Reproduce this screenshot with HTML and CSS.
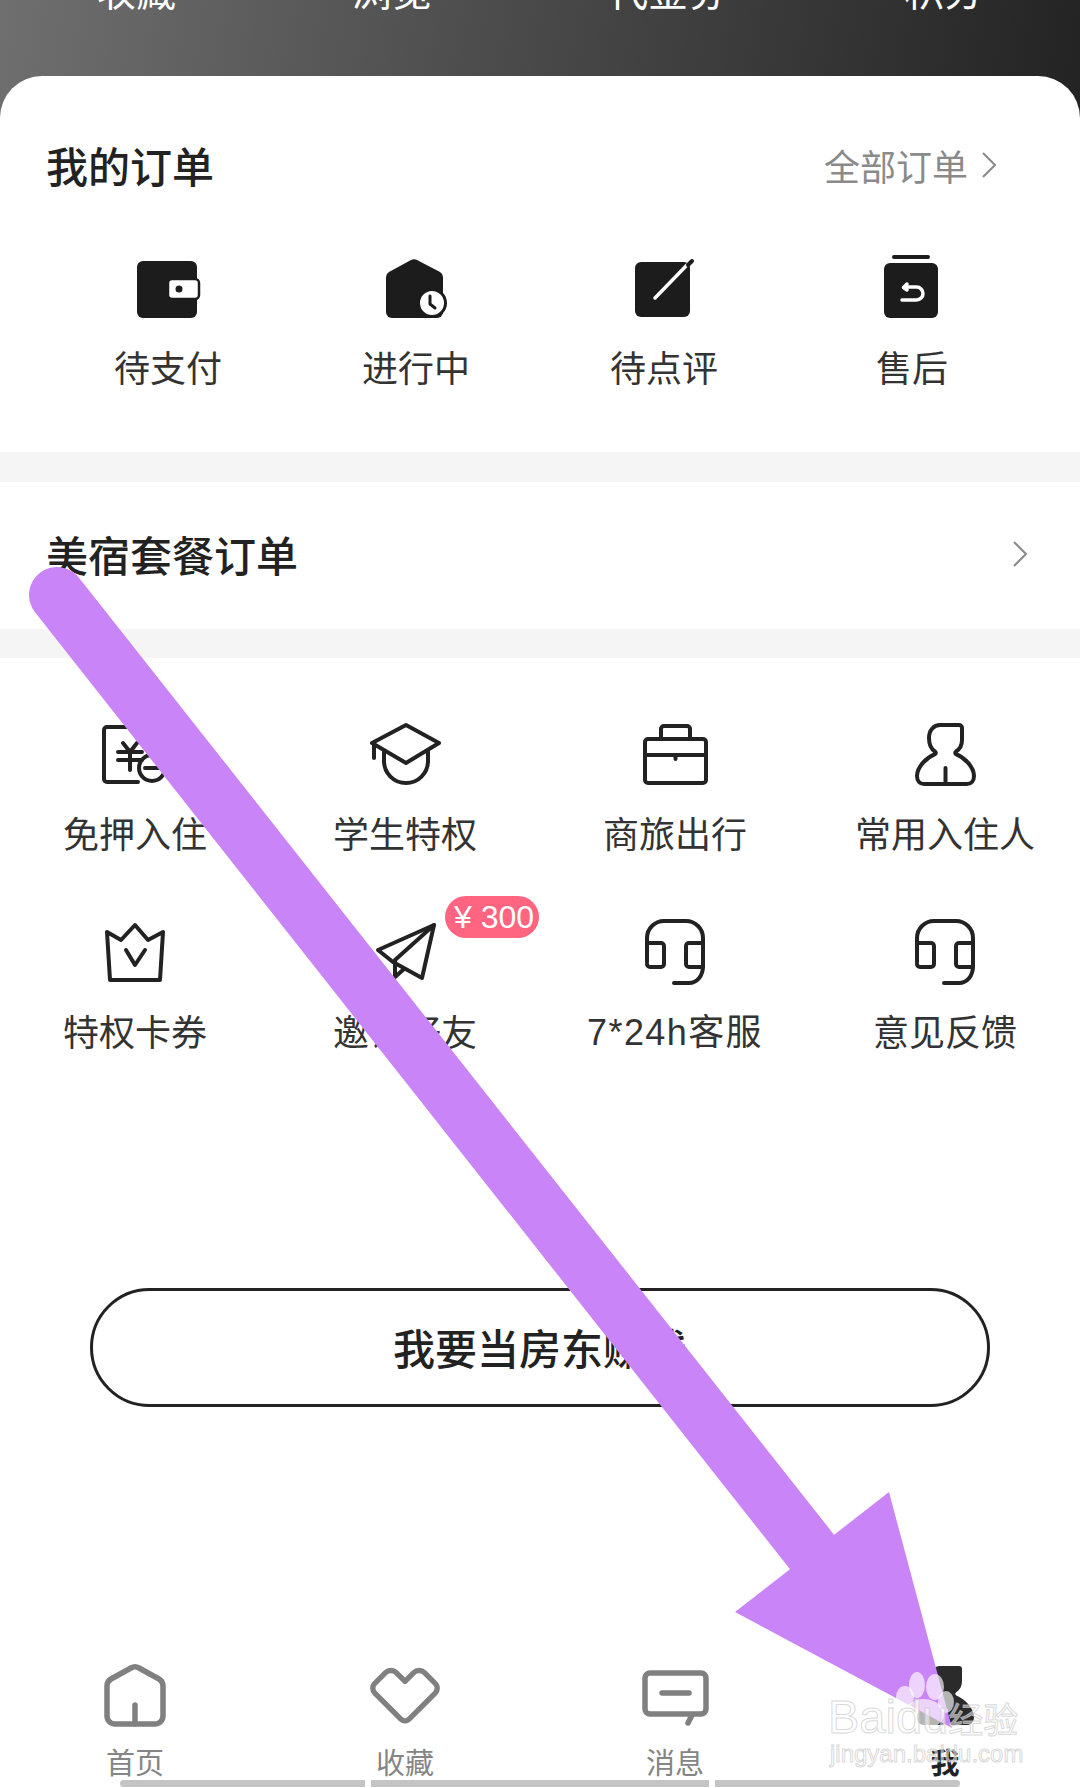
FILE: index.html
```html
<!DOCTYPE html>
<html lang="zh-CN">
<head>
  <meta charset="UTF-8">
  <meta name="viewport" content="width=device-width, initial-scale=1.0">
  <title>我的</title>
  <link rel="stylesheet" href="styles.css">
</head>
<body>

  <svg class="defs" width="0" height="0">
    <symbol id="headset" viewBox="0 0 72 72">
      <path d="M8 46V22A17 17 0 0 1 25 5H47A17 17 0 0 1 64 22V50C64 60 58 67 50 67H35"/>
      <path d="M8 27H22A3 3 0 0 1 25 30V48A3 3 0 0 1 22 51H11A3 3 0 0 1 8 48"/>
      <path d="M64 27H50A3 3 0 0 0 47 30V48A3 3 0 0 0 50 51H64"/>
    </symbol>
  </svg>

  <div class="page">
    <div class="top">
      <span>收藏</span>
      <span>浏览</span>
      <span>代金券</span>
      <span>积分</span>
    </div>

    <div class="card">
      <div class="orders">
        <div class="section-head">
          <h2>我的订单</h2>
          <a class="more">全部订单
            <svg class="chevron" viewBox="0 0 16 26"><path d="M2 1L14 13L2 25"/></svg>
          </a>
        </div>
        <div class="order-grid">
          <div class="item">
            <svg class="icon" viewBox="0 0 72 72">
              <rect x="6" y="7" width="60" height="57" rx="6" fill="#1c1c1c"/>
              <rect x="37" y="25" width="31" height="20" rx="4" fill="#fff" stroke="#1c1c1c" stroke-width="2.5"/>
              <circle cx="48" cy="35" r="3.5" fill="#1c1c1c"/>
            </svg>
            <span>待支付</span>
          </div>
          <div class="item">
            <svg class="icon" viewBox="0 0 72 72">
              <path d="M32 6a7 7 0 0 1 6 0L61 18a6 6 0 0 1 3 5V58a6 6 0 0 1-6 6H13a6 6 0 0 1-6-6V23a6 6 0 0 1 3-5Z" fill="#1c1c1c"/>
              <circle cx="53" cy="49" r="13.5" fill="#fff" stroke="#1c1c1c" stroke-width="3"/>
              <path d="M51 42V50L56 54" fill="none" stroke="#1c1c1c" stroke-width="3" stroke-linecap="round" stroke-linejoin="round"/>
            </svg>
            <span>进行中</span>
          </div>
          <div class="item">
            <svg class="icon" viewBox="0 0 72 72">
              <rect x="8" y="8" width="55" height="55" rx="6" fill="#1c1c1c"/>
              <path d="M28 44L60 11" stroke="#fff" stroke-width="3.5" stroke-linecap="round"/>
              <path d="M61 11L65 7" stroke="#1c1c1c" stroke-width="4" stroke-linecap="round"/>
            </svg>
            <span>待点评</span>
          </div>
          <div class="item">
            <svg class="icon" viewBox="0 0 72 72">
              <path d="M19 3H53" stroke="#1c1c1c" stroke-width="4" stroke-linecap="round"/>
              <rect x="9" y="9" width="54" height="55" rx="6" fill="#1c1c1c"/>
              <path d="M27 46H41.500A6.500 6.500 0 0 0 41.500 33H29M32 30L28.500 33.500L32 36" fill="none" stroke="#fff" stroke-width="3.500" stroke-linecap="round" stroke-linejoin="round"/>
            </svg>
            <span>售后</span>
          </div>
        </div>
      </div>

      <div class="band"></div>

      <div class="package">
        <h2>美宿套餐订单</h2>
        <svg class="chevron" viewBox="0 0 16 26"><path d="M2 1L14 13L2 25"/></svg>
      </div>

      <div class="band"></div>

      <div class="service-grid">
        <div class="item">
          <svg class="icon line" viewBox="0 0 72 72">
            <path d="M62 9H8A3 3 0 0 0 5 12V61A3 3 0 0 0 8 64H39"/>
            <path d="M24 25L31 34L38 25M19 34H43M19 42H43M31 34V52"/>
            <circle cx="53" cy="50" r="13"/>
            <path d="M46 50H60"/>
          </svg>
          <span>免押入住</span>
        </div>
        <div class="item">
          <svg class="icon line" viewBox="0 0 72 72">
            <path d="M37 7L70 25L37 45L3 25Z"/>
            <path d="M5 25V40"/>
            <path d="M15 34V43A22 22 0 0 0 59 43V34"/>
          </svg>
          <span>学生特权</span>
        </div>
        <div class="item">
          <svg class="icon line" viewBox="0 0 72 72">
            <rect x="6" y="21" width="61" height="44" rx="3"/>
            <path d="M22 21V11A3 3 0 0 1 25 8H48A3 3 0 0 1 51 11V21"/>
            <path d="M6 37H67M36.500 37V41"/>
          </svg>
          <span>商旅出行</span>
        </div>
        <div class="item">
          <svg class="icon line" viewBox="0 0 72 72">
            <path d="M31 7H50A3 3 0 0 1 53 10V22C53 27 51 31 47 33.500C46 34.300 46 35.500 47 36.200C56 40 65 49 65 58C65 63 62 66 58 66H15C11 66 8 63 8 58C8 49 17 40 26 36.200C27 35.500 27 34.300 26 33.500C22 31 20 26 20 20C20 12 25 7 31 7Z"/>
            <path d="M36.500 66V50"/>
          </svg>
          <span>常用入住人</span>
        </div>
        <div class="item">
          <svg class="icon line" viewBox="0 0 72 72">
            <path d="M8 16L22 24L36 9L49 24L64 16L61 64H11Z"/>
            <path d="M27 34L36 49L46 34"/>
          </svg>
          <span>特权卡券</span>
        </div>
        <div class="item">
          <svg class="icon line" viewBox="0 0 72 72">
            <path d="M65 9L9 34L24 46L53 62Z"/>
            <path d="M65 9L26 44V61L35 53"/>
          </svg>
          <span>邀请好友</span>
          <em class="badge">¥ 300</em>
        </div>
        <div class="item">
          <svg class="icon line"><use href="#headset"/></svg>
          <span class="latin">7*24h客服</span>
        </div>
        <div class="item">
          <svg class="icon line"><use href="#headset"/></svg>
          <span>意见反馈</span>
        </div>
      </div>

      <button class="host-button">我要当房东赚钱</button>

      <div class="tabbar">
        <div class="tab">
          <svg class="icon tab-line" viewBox="0 0 72 72">
            <path d="M32 9A8 8 0 0 1 40 9L60 20A8 8 0 0 1 64 27V57A8 8 0 0 1 56 65H16A8 8 0 0 1 8 57V27A8 8 0 0 1 12 20Z"/>
            <path d="M36 65V46"/>
          </svg>
          <span>首页</span>
        </div>
        <div class="tab">
          <svg class="icon tab-line" viewBox="0 0 74 74">
            <path d="M37 23L28 14A8 8 0 0 0 17 14L6 25A7 7 0 0 0 6 35L33 62A6 6 0 0 0 41 62L68 35A7 7 0 0 0 68 25L57 14A8 8 0 0 0 46 14Z"/>
          </svg>
          <span>收藏</span>
        </div>
        <div class="tab">
          <svg class="icon tab-line" viewBox="0 0 72 72">
            <rect x="6" y="14" width="61" height="41" rx="5"/>
            <path d="M23 34H50M53 56L49 64"/>
          </svg>
          <span>消息</span>
        </div>
        <div class="tab active">
          <svg class="icon" viewBox="0 0 72 72">
            <path d="M31 7H50A3 3 0 0 1 53 10V22C53 27 51 31 47 33.500C46 34.300 46 35.500 47 36.200C56 40 65 49 65 58C65 63 62 66 58 66H15C11 66 8 63 8 58C8 49 17 40 26 36.200C27 35.500 27 34.300 26 33.500C22 31 20 26 20 20C20 12 25 7 31 7Z" fill="#2b2b2b"/>
            <path d="M36.500 66V50" stroke="#fff" stroke-width="4"/>
          </svg>
          <span>我</span>
        </div>
      </div>

      <div class="gesture">
        <i></i><i></i><i></i>
      </div>
    </div>

    <!-- marker drawn over the screenshot -->
    <svg class="marker" viewBox="0 0 1080 1788">
      <path d="M57 595L812 1552" fill="none" stroke="#c985f8" stroke-width="56" stroke-linecap="round"/>
      <path d="M889 1492L735 1612L952 1728Z" fill="#c985f8"/>
    </svg>

    <div class="watermark">
      <svg class="paw" viewBox="0 0 70 70">
        <ellipse cx="15" cy="27" rx="9" ry="11"/>
        <ellipse cx="27" cy="15" rx="8" ry="13"/>
        <ellipse cx="45" cy="17" rx="9" ry="13"/>
        <ellipse cx="56" cy="32" rx="8" ry="11"/>
        <ellipse cx="34" cy="44" rx="20" ry="15"/>
      </svg>
      <div class="wm-brand">Baidu<b>经验</b></div>
      <div class="wm-url">jingyan.baidu.com</div>
    </div>
  </div>

</body>
</html>
```

FILE: styles.css
```css
* {
  box-sizing: border-box;
}

body {
  margin: 0;
  background-color: #fff;
  font-family: "Noto Sans CJK SC", "Liberation Sans", sans-serif;
  color: #2a2a2a;
}

.defs {
  position: absolute;
}

.page {
  position: relative;
  width: 1080px;
  height: 1788px;
  overflow: hidden;
  background-color: #fff;
}

/* Header strip, cut off by the top of the screen */
.top {
  display: flex;
  justify-content: space-between;
  height: 118px;
  padding: 0 96px;
  background: linear-gradient(100deg, #6f6f6f 0%, #4c4c4c 45%, #232323 100%);
  color: #fff;
  font-size: 40px;
  line-height: 44px;
}

.top span {
  margin-top: -33px;
  height: 44px;
}

.card {
  display: flex;
  flex-direction: column;
  height: 1712px;
  margin-top: -42px;
  background-color: #fff;
  border-radius: 42px 42px 0 0;
}

h2 {
  margin: 0;
  font-size: 42px;
  line-height: 48px;
  font-weight: 500;
  color: #222;
}

.chevron {
  width: 16px;
  height: 26px;
  fill: none;
  stroke: #888;
  stroke-width: 2;
}

.orders {
  height: 376px;
  padding-top: 65px;
}

.section-head {
  display: flex;
  justify-content: space-between;
  align-items: center;
  padding: 0 83px 0 46px;
}

.more {
  display: flex;
  align-items: center;
  gap: 13px;
  font-size: 36px;
  line-height: 48px;
  color: #8a8a8a;
}

.order-grid {
  display: grid;
  grid-template-columns: repeat(4, 248px);
  margin: 65px 0 0 43px;
}

.item {
  position: relative;
  display: flex;
  flex-direction: column;
  align-items: center;
  font-size: 36px;
  line-height: 50px;
  color: #333;
}

.latin {
  margin: 3px 0 -3px;
  font-family: "Liberation Sans", "Noto Sans CJK SC", sans-serif;
  letter-spacing: 1.4px;
}

.icon {
  display: block;
  width: 72px;
  height: 72px;
}

.order-grid .icon {
  margin-bottom: 15px;
}

.order-grid span {
  padding-left: 2px;
}

.band {
  height: 29.500px;
  background-color: #f5f5f5;
}

.package {
  display: flex;
  justify-content: space-between;
  align-items: center;
  height: 147px;
  padding: 0 52px 2px 46px;
}

.service-grid {
  display: grid;
  grid-template-columns: repeat(4, 270px);
  row-gap: 59px;
  padding-top: 60px;
}

.service-grid .icon {
  margin-bottom: 17px;
}

.line {
  fill: none;
  stroke: #222;
  stroke-width: 4;
  stroke-linecap: round;
  stroke-linejoin: round;
}

.badge {
  position: absolute;
  top: -20px;
  left: 175px;
  height: 42px;
  padding: 0 5px 0 9px;
  border-radius: 21px;
  background-color: #ff6480;
  color: #fff;
  font-family: "Liberation Sans", sans-serif;
  font-style: normal;
  font-size: 32px;
  line-height: 42px;
  white-space: nowrap;
}

.host-button {
  align-self: center;
  width: 900px;
  height: 119px;
  margin-top: 233px;
  padding-bottom: 4px;
  border: 3px solid #222;
  border-radius: 60px;
  background-color: #fff;
  font-family: inherit;
  font-size: 42px;
  font-weight: 500;
  color: #222;
}

.tabbar {
  display: grid;
  grid-template-columns: repeat(4, 270px);
  margin-top: auto;
}

.tab {
  display: flex;
  flex-direction: column;
  align-items: center;
  font-size: 29px;
  line-height: 32px;
  color: #858585;
}

.tab .icon {
  margin-bottom: 14px;
}

.tab span {
  padding-bottom: 2px;
}

.tab-line {
  fill: none;
  stroke: #808080;
  stroke-width: 5.500;
  stroke-linecap: round;
  stroke-linejoin: round;
}

.tab.active {
  color: #222;
  font-weight: 700;
}

/* Gesture bar along the bottom edge */
.gesture {
  display: flex;
  gap: 6px;
  height: 7px;
  margin: 1px 0;
  padding-left: 120px;
}

.gesture i {
  width: 245px;
  background-color: #c4c4c4;
}

.gesture i:nth-child(2) {
  width: 338px;
}

.gesture i:first-child {
  border-radius: 4px 0 0 4px;
}

.gesture i:last-child {
  border-radius: 0 4px 4px 0;
}

.marker {
  position: absolute;
  top: 0;
  left: 0;
  width: 1080px;
  height: 1788px;
}

.watermark {
  position: absolute;
  top: 1668px;
  left: 828px;
  width: 200px;
  height: 100px;
}

.paw {
  position: absolute;
  top: 2px;
  left: 62px;
  width: 70px;
  height: 70px;
  fill: rgba(255, 255, 255, 0.65);
}

.wm-brand {
  position: absolute;
  top: 26px;
  left: 0;
  font-family: "Liberation Sans", sans-serif;
  font-size: 47px;
  line-height: 46px;
  white-space: nowrap;
  color: rgba(255, 255, 255, 0.5);
  -webkit-text-stroke: 1px rgba(200, 200, 200, 0.7);
}

.wm-brand b {
  font-family: "Noto Sans CJK SC", sans-serif;
  font-size: 35px;
  font-weight: 400;
}

.wm-url {
  position: absolute;
  top: 70px;
  left: 2px;
  font-family: "Liberation Sans", sans-serif;
  font-size: 24px;
  line-height: 32px;
  white-space: nowrap;
  color: rgba(255, 255, 255, 0.5);
  -webkit-text-stroke: 1px rgba(200, 200, 200, 0.7);
}
```
